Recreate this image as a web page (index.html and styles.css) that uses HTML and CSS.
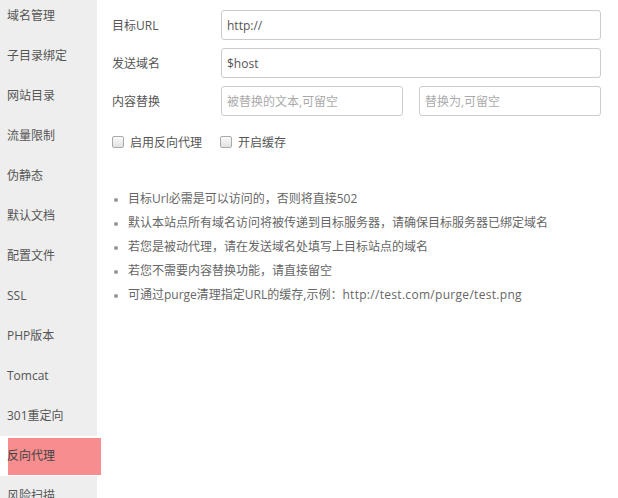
FILE: index.html
```html
<!DOCTYPE html>
<html lang="zh-CN">
<head>
<meta charset="utf-8">
<title>反向代理</title>
<link rel="stylesheet" href="styles.css">
</head>
<body>
<div class="layout">
  <aside class="sidebar">
    <ul class="menu">
      <li>域名管理</li>
      <li>子目录绑定</li>
      <li>网站目录</li>
      <li>流量限制</li>
      <li>伪静态</li>
      <li>默认文档</li>
      <li>配置文件</li>
      <li>SSL</li>
      <li>PHP版本</li>
      <li>Tomcat</li>
      <li>301重定向</li>
      <li class="active">反向代理</li>
      <li>风险扫描</li>
    </ul>
  </aside>
  <main class="content">
    <div class="row">
      <label class="label">目标URL</label>
      <input class="field" type="text" value="http://">
    </div>
    <div class="row">
      <label class="label">发送域名</label>
      <input class="field" type="text" value="$host">
    </div>
    <div class="row">
      <label class="label">内容替换</label>
      <div class="pair">
        <input class="field" type="text" placeholder="被替换的文本,可留空">
        <input class="field" type="text" placeholder="替换为,可留空">
      </div>
    </div>
    <div class="checks">
      <label class="check"><span class="box"></span>启用反向代理</label>
      <label class="check"><span class="box"></span>开启缓存</label>
    </div>
    <ul class="tips">
      <li>目标Url必需是可以访问的，否则将直接502</li>
      <li>默认本站点所有域名访问将被传递到目标服务器，请确保目标服务器已绑定域名</li>
      <li>若您是被动代理，请在发送域名处填写上目标站点的域名</li>
      <li>若您不需要内容替换功能，请直接留空</li>
      <li>可通过purge清理指定URL的缓存,示例：<span class="wide">http://test.com/purge/test.png</span></li>
    </ul>
  </main>
</div>
</body>
</html>
```
FILE: styles.css
```css
* { box-sizing: border-box; }
html, body {
  margin: 0;
  padding: 0;
  background: #fff;
  font-family: "Open Sans", "Noto Sans CJK SC", sans-serif;
  font-size: 12px;
  color: #555;
}
.layout {
  display: flex;
  height: 498px;
  overflow: hidden;
}
.sidebar {
  width: 97px;
  flex: none;
  background: #eeeeee;
  position: relative;
  z-index: 1;
}
.menu {
  list-style: none;
  margin: -4px 0 0 0;
  padding: 0;
}
.menu li {
  height: 40px;
  line-height: 40px;
  padding-left: 7px;
  white-space: nowrap;
  color: #555;
}
.menu li.active {
  width: 101px;
  background-color: #fff;
  background-image: linear-gradient(#f78d8e, #f78d8e);
  background-repeat: no-repeat;
  background-position: 8px 2px;
  background-size: 93px 37px;
  color: #444;
}
.content {
  flex: 1;
  padding: 10px 17px 0 15px;
}
.row {
  display: flex;
  align-items: center;
  margin-bottom: 8px;
}
.label {
  width: 109px;
  flex: none;
  color: #555;
}
.field {
  width: 380px;
  height: 30px;
  border: 1px solid #ccc;
  border-radius: 3px;
  padding: 0 5px;
  font-family: "Open Sans", "Noto Sans CJK SC", sans-serif;
  font-size: 12px;
  color: #555;
  background: #fff;
  outline: none;
}
.field::placeholder { color: #aaa; }
.pair {
  display: flex;
  gap: 16px;
  width: 380px;
}
.pair .field { width: 182px; }
.checks {
  display: flex;
  gap: 18px;
  margin-top: 16px;
  height: 20px;
  align-items: center;
}
.check {
  display: flex;
  align-items: center;
  gap: 6px;
  color: #555;
}
.box {
  width: 12px;
  height: 12px;
  border: 1px solid #aaa;
  border-radius: 2px;
  background: linear-gradient(#fafafa, #e2e2e2);
}
.check:first-child { width: 90px; }
.tips {
  margin: 35px 0 0 0;
  padding-left: 16px;
  color: #666;
}
.tips li {
  line-height: 24px;
  white-space: nowrap;
}
.tips li::marker { color: #999; font-size: 10px; }
.wide { letter-spacing: 0.3px; }
```
